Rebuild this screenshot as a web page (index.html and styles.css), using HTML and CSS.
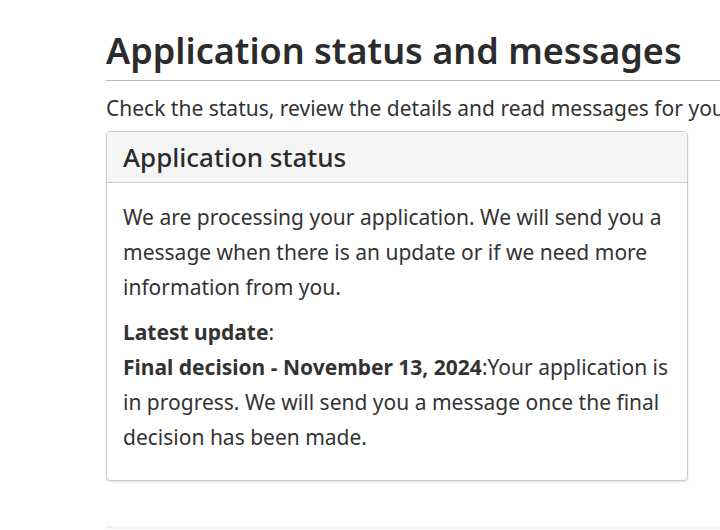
FILE: index.html
```html
<!DOCTYPE html>
<html>
  <head>
    <title>Application status and messages</title>
    <link rel="stylesheet" href="styles.css">
  </head>
  <body>
    <main class="page">
      <h1 class="page-title">Application status and messages</h1>
      <p class="lead">Check the status, review the details and read messages for your application.</p>

      <section class="panel">
        <div class="panel-heading">
          <h2 class="panel-title">Application status</h2>
        </div>
        <div class="panel-body">
          <p>We are processing your application. We will send you a message when there is an update or if we need more information from you.</p>
          <p>
            <strong>Latest update</strong>:<br>
            <strong>Final decision - November 13, 2024</strong>:Your application is in progress. We will send you a message once the final decision has been made.
          </p>
        </div>
      </section>

      <section class="panel panel-next"></section>
    </main>
  </body>
</html>
```

FILE: styles.css
```css
* {
  margin: 0;
  padding: 0;
  box-sizing: border-box;
}

html,
body {
  height: 100%;
  overflow: hidden;
}

body {
  background: #fff;
  color: #333;
  font-family: "Noto Sans", "Open Sans", sans-serif;
  font-size: 21px;
  line-height: 35px;
}

.page {
  width: 720px;
  padding-left: 106px;
  padding-top: 26px;
}

.page-title {
  font-size: 36px;
  font-weight: 600;
  line-height: 50px;
  color: #2b2b2b;
  padding-bottom: 4px;
  border-bottom: 1px solid #cbb5b7;
  white-space: nowrap;
}

.lead {
  margin-top: 10px;
  white-space: nowrap;
}

.panel {
  width: 582px;
  margin-top: 5px;
  border: 1px solid #ccc;
  border-radius: 4px;
  background: #fff;
  box-shadow: 0 1px 2px rgba(0, 0, 0, 0.12);
}

.panel-heading {
  background: #f5f5f5;
  border-bottom: 1px solid #ccc;
  border-radius: 3px 3px 0 0;
  padding: 6px 16px 5px;
}

.panel-title {
  font-size: 26px;
  font-weight: 500;
  line-height: 39px;
  color: #2b2b2b;
}

.panel-body {
  padding: 17px 16px 25px;
}

.panel-body p + p {
  margin-top: 10px;
}

.panel-next {
  width: 614px;
  margin-top: 45px;
  height: 40px;
  border: none;
  border-top: 3px solid #f4f4f4;
  border-radius: 0;
  box-shadow: none;
}
```
